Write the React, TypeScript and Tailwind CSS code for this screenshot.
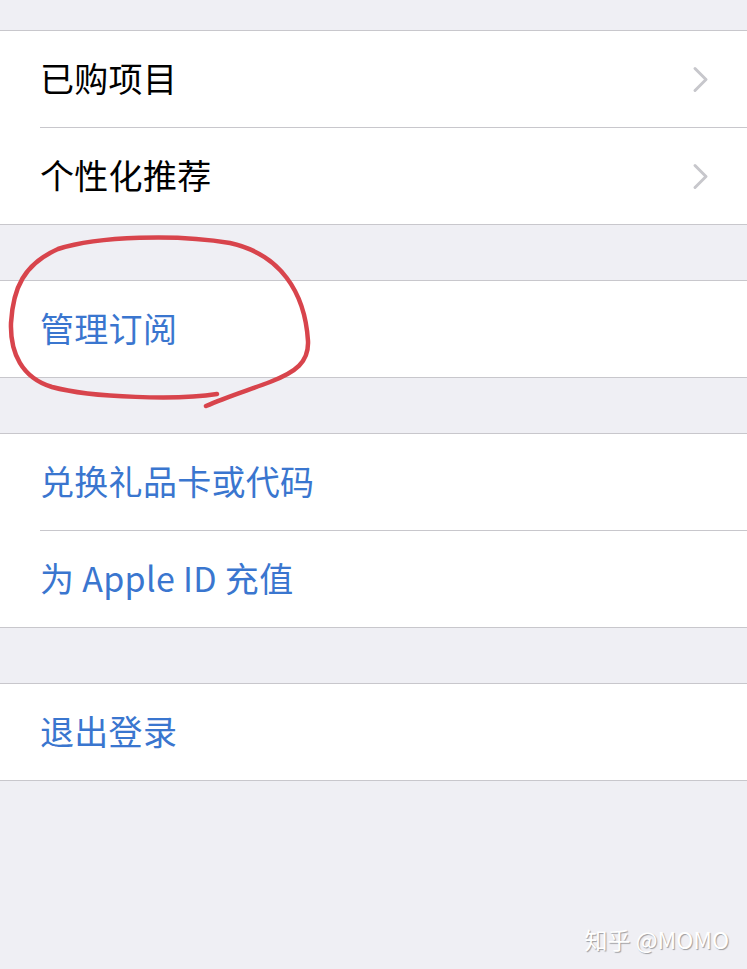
import { ReactNode } from "react";

type Row = { label: string; tone: "plain" | "link"; chevron?: boolean };

const sections: Row[][] = [
  [
    { label: "已购项目", tone: "plain", chevron: true },
    { label: "个性化推荐", tone: "plain", chevron: true },
  ],
  [{ label: "管理订阅", tone: "link" }],
  [
    { label: "兑换礼品卡或代码", tone: "link" },
    { label: "为 Apple ID 充值", tone: "link" },
  ],
  [{ label: "退出登录", tone: "link" }],
];

function Chevron() {
  return (
    <svg width="17" height="27" viewBox="0 0 17 27" className="shrink-0">
      <path
        d="M3 2.5 L14 13.5 L3 24.5"
        fill="none"
        stroke="#c7c7cc"
        strokeWidth="3"
        strokeLinecap="round"
        strokeLinejoin="round"
      />
    </svg>
  );
}

function Section({ children }: { children: ReactNode }) {
  return (
    <div className="bg-white border-y border-[#c8c7cc]">{children}</div>
  );
}

function ListRow({ row, last }: { row: Row; last: boolean }) {
  return (
    <div className="pl-[40px]">
      <div
        className={`flex items-center pr-[38px] ${
          last ? "h-[96px]" : "border-b border-[#c8c7cc] h-[97px]"
        }`}
      >
        <span
          className={`flex-1 text-[34px] leading-none tracking-[0.3px] -mt-[3px] ${
            row.tone === "link" ? "text-[#3a76cf]" : "text-black"
          }`}
        >
          {row.label}
        </span>
        {row.chevron && <Chevron />}
      </div>
    </div>
  );
}

export default function App() {
  return (
    <div
      className="relative min-h-screen bg-[#efeff4] pt-[30px] overflow-hidden"
      style={{ fontFamily: '"Noto Sans CJK SC", "Noto Sans", sans-serif' }}
    >
      <div className="flex flex-col gap-[55px]">
        {sections.map((rows, i) => (
          <Section key={i}>
            {rows.map((row, j) => (
              <ListRow key={row.label} row={row} last={j === rows.length - 1} />
            ))}
          </Section>
        ))}
      </div>

      {/* hand-drawn marker loop around the subscriptions row */}
      <svg
        className="absolute left-0 top-0 pointer-events-none"
        width="747"
        height="969"
        viewBox="0 0 747 969"
      >
        <path
          d="M217 394 C180 400 92 398 52 387 C22 378 10 353 11 323 C13 288 24 264 58 249 C98 236 178 234 230 243 C280 254 305 292 308 341 C309 362 296 372 270 382 C246 391 226 397 206 406"
          fill="none"
          stroke="#d8444c"
          strokeWidth="4.5"
          strokeLinecap="round"
          strokeLinejoin="round"
        />
      </svg>

      <div className="absolute right-[18px] bottom-[18px] text-[23px] leading-none text-white [text-shadow:1px_1px_1px_rgba(0,0,0,0.35)]">
        知乎 @MOMO
      </div>
    </div>
  );
}
